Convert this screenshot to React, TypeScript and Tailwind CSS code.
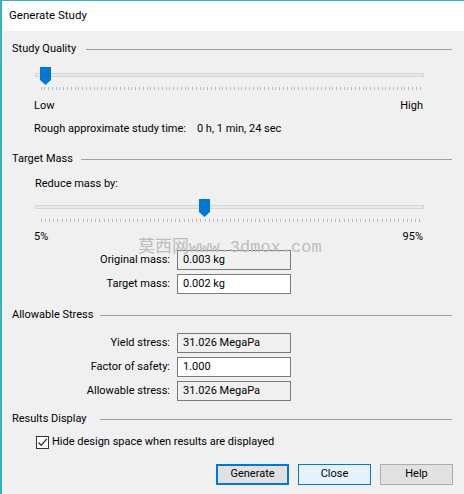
import React from "react";

const font = { fontFamily: 'Roboto, "Noto Sans", sans-serif' };

function Header({ label, w }: { label: string; w: string }) {
  return (
    <div className="flex items-center h-[16px] pl-[10px] pr-[12px]">
      <div className={`${w} shrink-0 whitespace-nowrap`}>{label}</div>
      <div className="flex-1 h-px bg-[#a0a0a0]" />
    </div>
  );
}

function Ticks({ step }: { step: number }) {
  const xs: number[] = [];
  for (let x = 0.5; x <= 380; x += step) xs.push(Math.round(x) + 0.5);
  return (
    <svg width="381" height="4" className="absolute left-[5px] top-[25px]">
      {xs.map((x, i) => (
        <line key={i} x1={x} y1={0} x2={x} y2={3} stroke="#bcbcbc" strokeWidth="1" />
      ))}
    </svg>
  );
}

function Slider({ pos, step }: { pos: number; step: number }) {
  return (
    <div className="relative ml-[33px] w-[389px] h-[30px]">
      <div className="absolute left-0 right-0 top-[11px] h-[4px] bg-[#e7eaea] border border-[#d6d6d6]" />
      <Ticks step={step} />
      <svg width="11" height="18" viewBox="0 0 11 18" className="absolute top-[5px]" style={{ left: pos }}>
        <path d="M0 0 H11 V13 L5.5 18 L0 13 Z" fill="#0078d7" />
      </svg>
    </div>
  );
}

function Field({ label, value, ro }: { label: string; value: string; ro?: boolean }) {
  return (
    <div className="flex items-center h-[20px]">
      <div className="w-[168px] text-right whitespace-nowrap">{label}</div>
      <div
        className={`ml-[7px] w-[114px] h-[20px] border border-[#7a7a7a] flex items-center pl-[5px] ${
          ro ? "bg-[#f0f0f0]" : "bg-white"
        }`}
      >
        {value}
      </div>
    </div>
  );
}

export default function App() {
  return (
    <div
      className="w-[464px] h-[494px] border-l-2 border-t border-[#38b2bf] flex flex-col text-[11px] text-black bg-[#f0f0f0] relative overflow-hidden"
      style={font}
    >
      <div className="h-[30px] bg-white flex items-center pl-[7px] shrink-0 text-[11.5px]">Generate Study</div>

      <div className="mt-[10px]">
        <Header label="Study Quality" w="w-[74px]" />
      </div>
      <div className="mt-[5px]">
        <Slider pos={5} step={3.79} />
      </div>
      <div className="mt-[6px] h-[16px] flex items-center justify-between pl-[32px] pr-[41px]">
        <span>Low</span>
        <span>High</span>
      </div>
      <div className="mt-[7px] h-[16px] flex items-center pl-[32px] whitespace-pre">
        Rough approximate study time:    0 h, 1 min, 24 sec
      </div>

      <div className="mt-[14px]">
        <Header label="Target Mass" w="w-[69px]" />
      </div>
      <div className="mt-[9px] h-[16px] flex items-center pl-[33px]">Reduce mass by:</div>
      <div className="mt-[2px]">
        <Slider pos={164} step={4.21} />
      </div>
      <div className="mt-[5px] h-[16px] flex items-center justify-between pl-[32px] pr-[41px]">
        <span>5%</span>
        <span>95%</span>
      </div>

      <div className="mt-[5px] flex flex-col gap-[4px]">
        <Field label="Original mass:" value="0.003 kg" ro />
        <Field label="Target mass:" value="0.002 kg" />
      </div>

      <div className="mt-[13px]">
        <Header label="Allowable Stress" w="w-[88px]" />
      </div>
      <div className="mt-[10px] flex flex-col gap-[4px]">
        <Field label="Yield stress:" value="31.026 MegaPa" ro />
        <Field label="Factor of safety:" value="1.000" />
        <Field label="Allowable stress:" value="31.026 MegaPa" ro />
      </div>

      <div className="mt-[10px]">
        <Header label="Results Display" w="w-[88px]" />
      </div>
      <div className="mt-[7px] h-[16px] flex items-center pl-[34px]">
        <div className="w-[13px] h-[13px] border border-[#333333] bg-white flex items-center justify-center">
          <svg width="11" height="11" viewBox="0 0 11 11">
            <path d="M1.5 5.5 L4.2 8.3 L9.8 1.8" stroke="#222" strokeWidth="1.2" fill="none" />
          </svg>
        </div>
        <span className="ml-[3px]">Hide design space when results are displayed</span>
      </div>

      <div className="mt-[14px] flex justify-end gap-[9px] pr-[11px]">
        <button className="w-[73px] h-[21px] bg-[#e1e1e1] border-2 border-[#0078d7] flex items-center justify-center">
          Generate
        </button>
        <button className="w-[73px] h-[21px] bg-[#e5f1fb] border border-[#0078d7] flex items-center justify-center">
          Close
        </button>
        <button className="w-[73px] h-[21px] bg-[#e1e1e1] border border-[#adadad] flex items-center justify-center">
          Help
        </button>
      </div>

      <div
        className="absolute left-[136px] top-[237px] text-[17px] leading-[20px] text-[#bcbcbc] whitespace-nowrap"
        style={{ fontFamily: '"Liberation Mono", "Noto Sans CJK SC", monospace' }}
      >
        莫西网www.3dmox.com
      </div>
    </div>
  );
}
